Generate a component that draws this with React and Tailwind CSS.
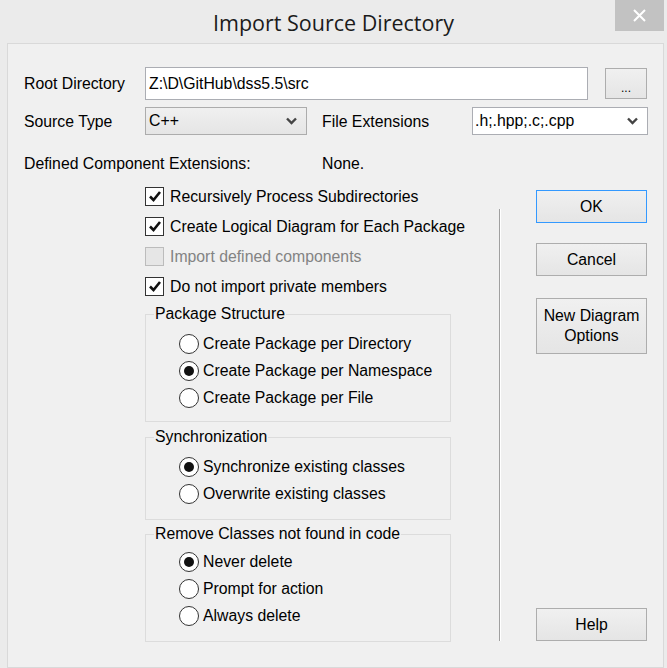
import { useState } from 'react'

function Check({ label, checked, disabled }) {
  return (
    <div className="h-[30px] flex items-center whitespace-nowrap">
      <span className={`shrink-0 w-[19px] h-[19px] border flex items-center justify-center ${disabled ? 'bg-[#e6e6e6] border-[#bcbcbc]' : 'bg-white border-[#333]'}`}>
        {checked && (
          <svg width="14" height="14" viewBox="0 0 14 14">
            <path d="M2 7.5 L5.5 11 L12 3" fill="none" stroke="#111" strokeWidth="2.6" />
          </svg>
        )}
      </span>
      <span className={`ml-[6px] pt-[2px] ${disabled ? 'text-[#838383]' : ''}`}>{label}</span>
    </div>
  )
}

function Radio({ label, checked }) {
  return (
    <div className="h-[27px] flex items-center ml-[25px] whitespace-nowrap">
      <span className="shrink-0 w-[20px] h-[20px] rounded-full border border-[#333] bg-white flex items-center justify-center">
        {checked && <span className="w-[10px] h-[10px] rounded-full bg-[#111]" />}
      </span>
      <span className="ml-[4px] pt-[1px]">{label}</span>
    </div>
  )
}

function Group({ title, className = '', children }) {
  return (
    <fieldset className={`border border-[#dcdcdc] px-[8px] ${className}`}>
      <legend className="h-[20px] leading-[20px] px-[1px]">{title}</legend>
      {children}
    </fieldset>
  )
}

function Btn({ children, focus, className = '' }) {
  return (
    <button className={`w-[111px] border bg-gradient-to-b from-[#f0f0f0] to-[#e5e5e5] leading-[20px] ${focus ? 'border-[#3399ff]' : 'border-[#adadad]'} ${className}`}>
      {children}
    </button>
  )
}

function Chevron() {
  return (
    <svg width="11" height="8" viewBox="0 0 11 8">
      <path d="M1 1.5 L5.5 6 L10 1.5" fill="none" stroke="#444" strokeWidth="2.4" />
    </svg>
  )
}

export default function App() {
  const [pkg] = useState('namespace')
  const [sync] = useState('sync')
  const [remove] = useState('never')

  return (
    <div className="w-[667px] h-[668px] bg-[#ebebeb] flex flex-col overflow-hidden text-[15.8px] text-black font-['Liberation_Sans',Arial,sans-serif]">
      {/* Title bar */}
      <div className="relative h-[43px] shrink-0 flex items-center justify-center">
        <span className="text-[21.5px] text-[#1b1b1b] font-['Open_Sans','Noto_Sans',sans-serif] pt-[4px]">Import Source Directory</span>
        <button className="absolute top-0 right-[3px] w-[49px] h-[31px] bg-[#c2c2c2] flex items-center justify-center">
          <svg width="13" height="13" viewBox="0 0 13 13">
            <path d="M1 1 L12 12 M12 1 L1 12" stroke="#fff" strokeWidth="2" />
          </svg>
        </button>
      </div>

      {/* Client area */}
      <div className="ml-[7px] w-[657px] h-[625px] bg-[#f0f0f0] border border-[#d9d9d9] pl-[16px] pt-[23px] flex flex-col">
        <div className="h-[33px] flex items-center">
          <span className="w-[121px]">Root Directory</span>
          <div className="w-[443px] h-[33px] bg-white border border-[#abadb3] flex items-center pl-[3px]">Z:\D\GitHub\dss5.5\src</div>
          <button className="ml-[17px] w-[42px] h-[31px] border border-[#adadad] bg-gradient-to-b from-[#f0f0f0] to-[#e5e5e5] text-[12px] leading-none pt-[8px]">...</button>
        </div>

        <div className="mt-[7px] h-[28px] flex items-center">
          <span className="w-[121px] pt-[2px]">Source Type</span>
          <div className="w-[162px] h-[28px] border border-[#acacac] bg-gradient-to-b from-[#f0f0f0] to-[#e5e5e5] flex items-center justify-between pl-[3px] pr-[9px]">
            <span>C++</span>
            <Chevron />
          </div>
          <span className="ml-[15px] w-[150px] pt-[2px]">File Extensions</span>
          <div className="w-[176px] h-[28px] border border-[#abadb3] bg-white flex items-center justify-between pl-[2px] pr-[9px]">
            <span>.h;.hpp;.c;.cpp</span>
            <Chevron />
          </div>
        </div>

        <div className="mt-[15px] h-[24px] flex items-center pt-[3px]">
          <span className="w-[298px]">Defined Component Extensions:</span>
          <span>None.</span>
        </div>

        <div className="mt-[7px] flex">
          <div className="ml-[121px] w-[306px] shrink-0 flex flex-col">
            <Check label="Recursively Process Subdirectories" checked />
            <Check label="Create Logical Diagram for Each Package" checked />
            <Check label="Import defined components" disabled />
            <Check label="Do not import private members" checked />

            <Group title="Package Structure" className="mt-[3px] pt-[6px] pb-[10px]">
              <Radio label="Create Package per Directory" checked={pkg === 'directory'} />
              <Radio label="Create Package per Namespace" checked={pkg === 'namespace'} />
              <Radio label="Create Package per File" checked={pkg === 'file'} />
            </Group>

            <Group title="Synchronization" className="mt-[5px] pt-[6px] pb-[12px]">
              <Radio label="Synchronize existing classes" checked={sync === 'sync'} />
              <Radio label="Overwrite existing classes" checked={sync === 'overwrite'} />
            </Group>

            <Group title="Remove Classes not found in code" className="mt-[4px] pt-[4px] pb-[12px]">
              <Radio label="Never delete" checked={remove === 'never'} />
              <Radio label="Prompt for action" checked={remove === 'prompt'} />
              <Radio label="Always delete" checked={remove === 'always'} />
            </Group>
          </div>

          <div className="ml-[48px] mt-[28px] mb-[1px] w-[2px] border-l border-[#a0a0a0] border-r border-r-white" />

          <div className="ml-[35px] flex flex-col">
            <Btn focus className="mt-[9px] h-[33px]">OK</Btn>
            <Btn className="mt-[20px] h-[33px]">Cancel</Btn>
            <Btn className="mt-[22px] h-[56px]">New Diagram<br />Options</Btn>
            <Btn className="mt-auto mb-[1px] h-[33px]">Help</Btn>
          </div>
        </div>
      </div>
    </div>
  )
}
